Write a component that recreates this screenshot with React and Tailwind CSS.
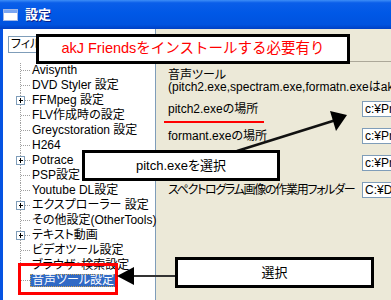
const treeItems = [
  { label: "Avisynth" },
  { label: "DVD Styler 設定" },
  { label: "FFMpeg 設定", plus: true },
  { label: "FLV作成時の設定" },
  { label: "Greycstoration 設定" },
  { label: "H264" },
  { label: "Potrace", plus: true },
  { label: "PSP設定" },
  { label: "Youtube DL設定" },
  { label: "エクスプローラー 設定", plus: true },
  { label: "その他設定(OtherTools)" },
  { label: "テキスト動画", plus: true },
  { label: "ビデオツール設定" },
  { label: "ブラウザ・検索設定" },
  { label: "音声ツール設定", selected: true, last: true },
];

const pathRows = [
  { label: "pitch2.exeの場所", value: "c:¥Program Files" },
  { label: "formant.exeの場所", value: "c:¥Program Files" },
  { label: "", value: "c:¥Program Files" },
  { label: "スペクトログラム画像の作業用フォルダー", value: "C:¥Documents", tight: true },
];

function Connector({ plus, last }) {
  return (
    <svg width="29" height="15" className="shrink-0" shapeRendering="crispEdges">
      <line x1="17.5" y1="0" x2="17.5" y2={last ? 8 : 15} stroke="#a0a0a0" strokeDasharray="1 1" />
      <line x1={plus ? 22 : 18} y1="7.5" x2="28" y2="7.5" stroke="#a0a0a0" strokeDasharray="1 1" />
      {plus && (
        <g>
          <rect x="13.5" y="3.5" width="8" height="8" fill="#fff" stroke="#7f9db9" />
          <line x1="15.5" y1="7.5" x2="20" y2="7.5" stroke="#000" />
          <line x1="17.5" y1="5" x2="17.5" y2="10" stroke="#000" />
        </g>
      )}
    </svg>
  );
}

function Tree() {
  return (
    <div className="w-[153px] shrink-0 bg-white border-r border-[#7f9db9] pt-[7px]">
      <div className="ml-[5px] w-[120px] h-[17px] border border-[#7f9db9] px-[2px] leading-[15px]">
        フィル
      </div>
      <div className="mt-[10px]">
        {treeItems.map((item) => (
          <div key={item.label} className="flex items-center h-[15px] whitespace-nowrap">
            <Connector plus={item.plus} last={item.last} />
            {item.selected ? (
              <span className="-ml-[2px] px-[1px] h-[13px] leading-[11px] bg-[#316ac5] text-white border border-dotted border-[#c6a055]">
                {item.label}
              </span>
            ) : (
              <span className="leading-[15px]">{item.label}</span>
            )}
          </div>
        ))}
      </div>
    </div>
  );
}

function RightPanel() {
  return (
    <div className="flex-1 min-w-0">
      <div className="h-[33px] border-b border-[#aca899]" />
      <div className="pl-[12px] pt-[7px] whitespace-nowrap">
        <div className="leading-[12px]">音声ツール</div>
        <div className="leading-[12px]">(pitch2.exe,spectram.exe,formatn.exeはakj freeから入手)</div>
        <div className="mt-[8px] flex flex-col gap-[11px]">
          {pathRows.map((row, i) => (
            <div key={i} className="flex items-center h-[16px]">
              <div className={row.tight ? "w-[194px] shrink-0 tracking-[-1.3px]" : "w-[194px] shrink-0"}>
                {row.label}
              </div>
              <div className="w-[80px] h-[16px] shrink-0 bg-white border border-[#7f9db9] px-[2px] leading-[14px]">
                {row.value}
              </div>
            </div>
          ))}
        </div>
      </div>
    </div>
  );
}

function WindowIcon() {
  return (
    <svg width="15" height="12" shapeRendering="crispEdges">
      <rect x="0.5" y="0.5" width="14" height="11" fill="#fff" stroke="#9fb6e6" />
      <rect x="1" y="1" width="13" height="3" fill="#7aa6f2" />
    </svg>
  );
}

export default function App() {
  return (
    <div className="relative w-[391px] h-[300px] overflow-hidden bg-[#ece9d8] text-black text-[12px] font-['Liberation_Sans','Noto_Sans_CJK_JP',sans-serif] [font-feature-settings:'palt']">
      <div className="h-[29px] flex items-center gap-[7px] pl-[3px] pt-[1px] bg-[linear-gradient(180deg,#3d8ef7_0%,#0a5ee9_10%,#0058e6_45%,#0053df_85%,#0040c4_100%)]">
        <WindowIcon />
        <span className="text-white font-bold text-[13px] [text-shadow:1px_1px_#0a1e8a]">設定</span>
      </div>
      <div className="flex h-[271px]">
        <div className="w-[3px] shrink-0 bg-[#0553e2]" />
        <Tree />
        <RightPanel />
      </div>

      {/* annotations */}
      <div className="absolute left-[164px] top-[121px] w-[100px] h-[2px] bg-[#ff0000]" />
      <div className="absolute left-[18px] top-[263px] w-[100px] h-[32px] border-[3px] border-[#ff0000]" />

      <svg className="absolute inset-0 pointer-events-none" width="391" height="300">
        <line x1="237" y1="151" x2="336" y2="120" stroke="#111" strokeWidth="2.5" />
        <polygon points="347,115 330,111 336,131" fill="#000" />
        <line x1="132" y1="276" x2="176" y2="276" stroke="#333" strokeWidth="2" />
        <polygon points="117,276 134,267 134,285" fill="#000" />
      </svg>

      <div className="absolute left-[36px] top-[34px] w-[314px] h-[30px] border-[3px] border-black bg-white flex items-center justify-center text-[#ff0000] text-[14.5px] [font-feature-settings:normal]">
        akJ Friendsをインストールする必要有り
      </div>
      <div className="absolute left-[82px] top-[150px] w-[198px] h-[31px] border-[3px] border-black bg-white flex items-center justify-center text-[13px]">
        pitch.exeを選択
      </div>
      <div className="absolute left-[175px] top-[257px] w-[199px] h-[31px] border-[3px] border-black bg-white flex items-center justify-center text-[13px]">
        選択
      </div>
    </div>
  );
}
